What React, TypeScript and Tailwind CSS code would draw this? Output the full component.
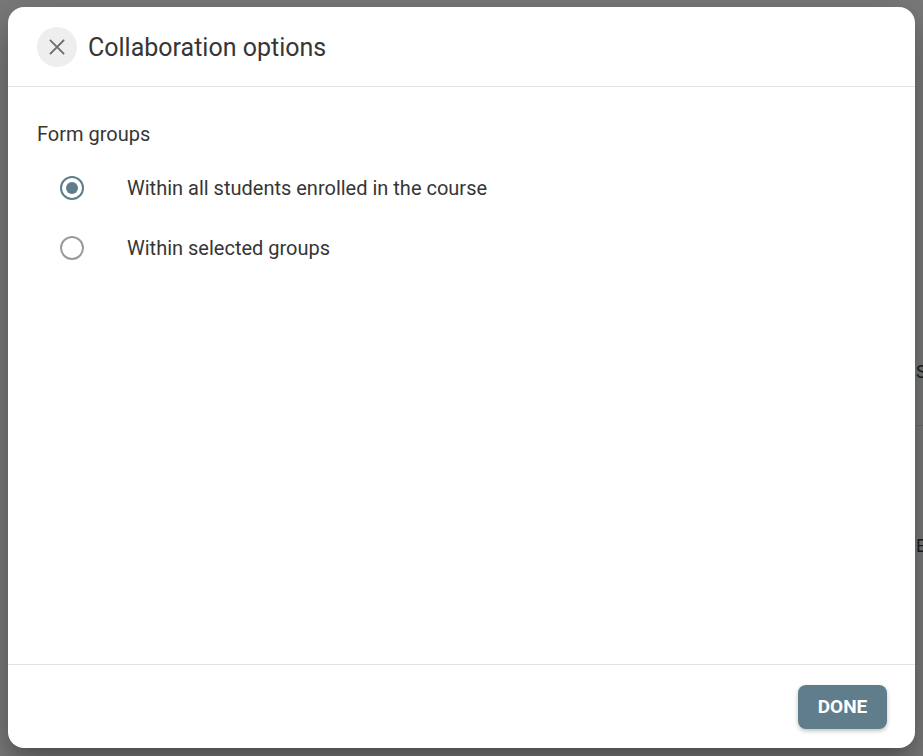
import { useState } from "react";

type Option = { id: string; label: string };

const options: Option[] = [
  { id: "all", label: "Within all students enrolled in the course" },
  { id: "selected", label: "Within selected groups" },
];

function Radio({ checked }: { checked: boolean }) {
  return (
    <span
      className={
        "flex h-[24px] w-[24px] items-center justify-center rounded-full border-2 " +
        (checked ? "border-[#5f7d8b]" : "border-[#9a9a9a]")
      }
    >
      {checked && <span className="h-[12px] w-[12px] rounded-full bg-[#5f7d8b]" />}
    </span>
  );
}

export default function App() {
  const [choice, setChoice] = useState("all");

  return (
    <div className="relative h-screen w-full overflow-hidden bg-white font-['Roboto',sans-serif]">
      {/* page underneath the modal */}
      <div className="flex h-full">
        <div className="w-[916px] shrink-0" />
        <div className="flex flex-col pt-[358px] text-[18px] text-[#2c4a5a]">
          <div className="h-[67px]">Status</div>
          <div className="h-px w-full bg-[#dddddd]" />
          <div className="pt-[106px]">Edit</div>
        </div>
      </div>

      <div className="absolute inset-0 flex bg-black/[0.52] pt-[7px] pb-[8px] pl-[8px] pr-[8px]">
        <div className="flex w-[907px] flex-col rounded-[16px] bg-white shadow-[0_11px_15px_-7px_rgba(0,0,0,0.2),0_24px_38px_3px_rgba(0,0,0,0.14),0_9px_46px_8px_rgba(0,0,0,0.12)]">
          <div className="flex h-[80px] items-center gap-[11px] border-b border-[#e3e3e3] pl-[29px]">
            <button className="flex h-[40px] w-[40px] items-center justify-center rounded-full bg-[#eeeeee] text-[#6b6b6b]">
              <svg width="22" height="22" viewBox="0 0 24 24" fill="none" stroke="currentColor" strokeWidth="2" strokeLinecap="square">
                <path d="M5 5l14 14M19 5L5 19" />
              </svg>
            </button>
            <h2 className="pt-[2px] text-[25px] text-[#363636]">Collaboration options</h2>
          </div>

          <div className="flex-1 pl-[29px] pt-[35px]">
            <div className="text-[20px] leading-[24px] text-[#363636]">Form groups</div>
            <div className="mt-[12px] flex flex-col">
              {options.map((o) => (
                <label
                  key={o.id}
                  className="flex h-[60px] cursor-pointer items-center pl-[23px]"
                  onClick={() => setChoice(o.id)}
                >
                  <Radio checked={choice === o.id} />
                  <span className="pl-[43px] text-[20px] text-[#363636]">{o.label}</span>
                </label>
              ))}
            </div>
          </div>

          <div className="flex justify-end border-t border-[#e3e3e3] px-[28px] pt-[20px] pb-[19px]">
            <button className="h-[44px] w-[89px] rounded-[8px] bg-[#5f7d8b] text-[19px] font-bold text-white shadow-[0_2px_4px_rgba(0,0,0,0.25)]">
              DONE
            </button>
          </div>
        </div>
      </div>
    </div>
  );
}
